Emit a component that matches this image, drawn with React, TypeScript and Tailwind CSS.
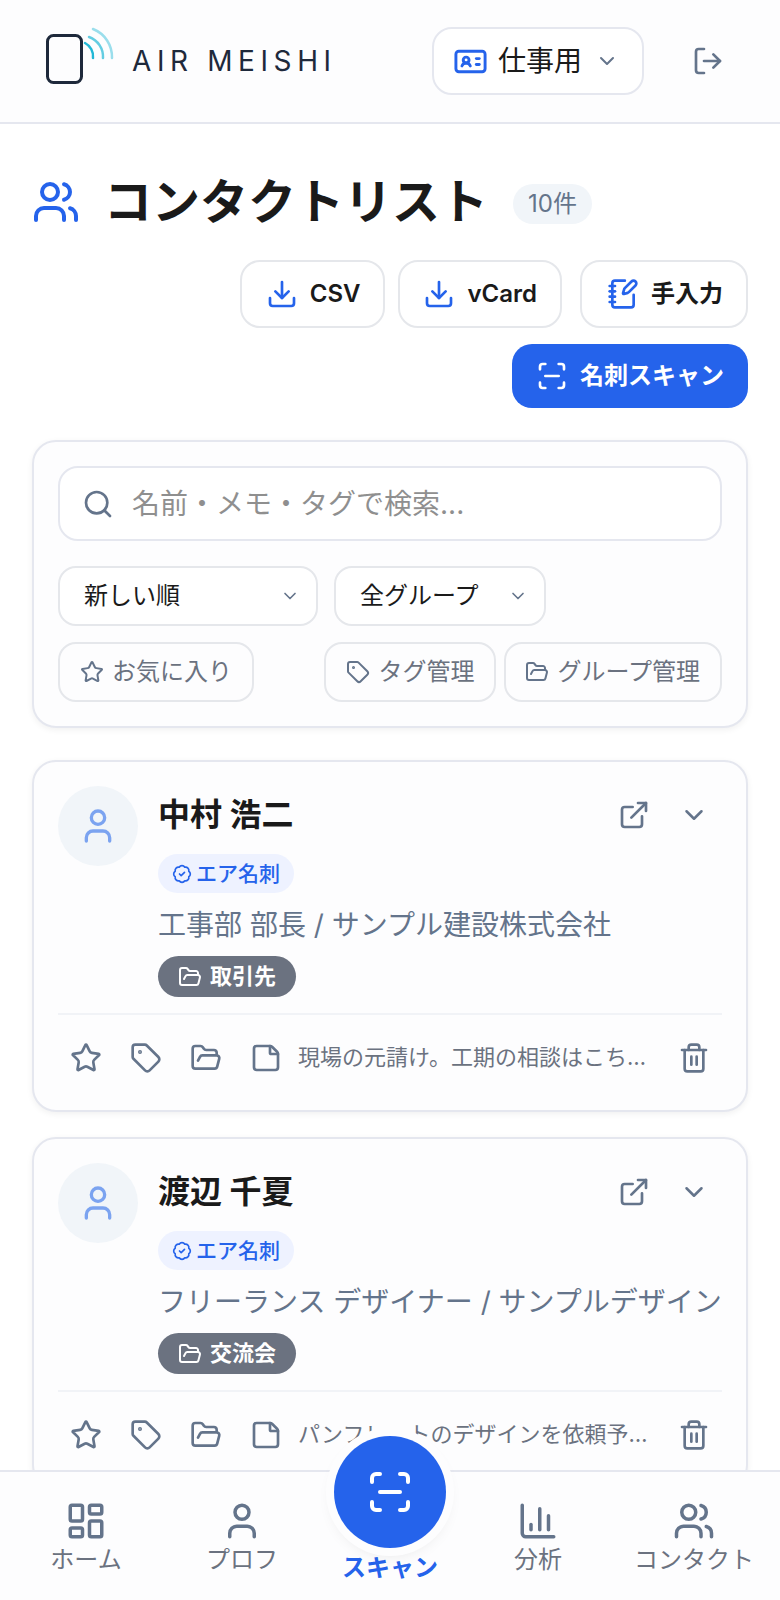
import {
  BadgeCheck,
  ChartColumn,
  ChevronDown,
  Download,
  ExternalLink,
  FolderOpen,
  IdCard,
  LayoutDashboard,
  LogOut,
  NotebookPen,
  ScanLine,
  Search,
  Star,
  StickyNote,
  Tag,
  Trash2,
  User,
  Users,
} from 'lucide-react'

const CONTACTS = [
  {
    name: '中村 浩二',
    role: '工事部 部長 / サンプル建設株式会社',
    group: '取引先',
    memo: '現場の元請け。工期の相談はこちらまで。担当者',
  },
  {
    name: '渡辺 千夏',
    role: 'フリーランス デザイナー / サンプルデザイン',
    group: '交流会',
    memo: 'パンフレットのデザインを依頼予定。来月に打合せ',
  },
]

const NAV_LEFT = [
  { label: 'ホーム', Icon: LayoutDashboard },
  { label: 'プロフ', Icon: User },
]

const NAV_RIGHT = [
  { label: '分析', Icon: ChartColumn },
  { label: 'コンタクト', Icon: Users },
]

function Logo() {
  return (
    <svg width="72" height="62" viewBox="0 0 72 62" fill="none" className="shrink-0 overflow-visible">
      <rect x="4.5" y="5.5" width="34" height="47" rx="6" stroke="#1e293b" strokeWidth="3" />
      <path d="M42 13A15 15 0 0 1 50 28" stroke="#22b8d6" strokeWidth="2.5" strokeLinecap="round" />
      <path d="M46 7A21 21 0 0 1 60 28" stroke="#22b8d6" strokeOpacity="0.7" strokeWidth="2.5" strokeLinecap="round" />
      <path d="M50 -1A30 30 0 0 1 69 28" stroke="#22b8d6" strokeOpacity="0.45" strokeWidth="2.5" strokeLinecap="round" />
    </svg>
  )
}

function ActionButton({ Icon, label, className = '' }: { Icon: typeof Download; label: string; className?: string }) {
  return (
    <button className={`h-[68px] px-[23px] flex items-center gap-3 bg-white border-2 border-[#e5e7eb] rounded-[20px] text-[24px] font-semibold text-[#1a1a1a] ${className}`}>
      <Icon size={32} strokeWidth={2} className="text-[#2563eb]" />
      {label}
    </button>
  )
}

function FilterSelect({ label, width }: { label: string; width: string }) {
  return (
    <div className={`${width} h-[60px] pl-[24px] pr-[16px] flex items-center justify-between bg-white border-2 border-[#e5e7eb] rounded-[18px] text-[24px] text-[#1a1a1a]`}>
      {label}
      <ChevronDown size={20} strokeWidth={2} className="text-[#64748b]" />
    </div>
  )
}

function OutlineButton({ Icon, label, className = '' }: { Icon: typeof Star; label: string; className?: string }) {
  return (
    <button className={`h-[60px] px-5 flex items-center gap-2 border-2 border-[#e5e7eb] rounded-[18px] text-[24px] text-[#6b7280] bg-[#fdfdfe] ${className}`}>
      <Icon size={24} strokeWidth={2} className="text-[#64748b]" />
      {label}
    </button>
  )
}

function ContactCard({ name, role, group, memo }: { name: string; role: string; group: string; memo: string }) {
  return (
    <div className="bg-[#fdfdfe] border-2 border-[#e5e7ef] rounded-[24px] shadow-[0_2px_6px_rgba(0,0,0,0.06)] px-6 pt-6 pb-[36px]">
      <div className="flex gap-5">
        <div className="w-20 h-20 shrink-0 rounded-full bg-[#f1f5f9] flex items-center justify-center">
          <User size={40} strokeWidth={2} className="text-[#7ba3f0]" />
        </div>
        <div className="flex-1 min-w-0">
          <div className="flex items-center justify-between h-[56px] mt-[1px]">
            <div className="text-[32px] font-bold text-[#1a1a1a]">{name}</div>
            <div className="flex items-center gap-[29px] pr-[13px]">
              <ExternalLink size={32} strokeWidth={2} className="text-[#64748b]" />
              <ChevronDown size={30} strokeWidth={2} className="text-[#64748b]" />
            </div>
          </div>
          <div className="mt-[11px] w-fit h-[39px] px-[14px] flex items-center gap-1 rounded-full bg-[#eef2ff] text-[#2563eb] text-[21px] font-medium">
            <BadgeCheck size={20} strokeWidth={2} />
            エア名刺
          </div>
          <div className="mt-[10px] text-[28px] leading-[44px] text-[#64748b] whitespace-nowrap">{role}</div>
          <div className="mt-[9px] w-fit h-[41px] px-5 flex items-center gap-2 rounded-full bg-[#6b7280] text-white text-[22px] font-semibold">
            <FolderOpen size={24} strokeWidth={2} />
            {group}
          </div>
        </div>
      </div>
      <div className="mt-[16px] border-t-2 border-[#f1f3f7] pt-[26px] flex items-center pl-3 text-[#64748b]">
        <Star size={32} strokeWidth={2} className="shrink-0" />
        <Tag size={32} strokeWidth={2} className="shrink-0 ml-7" />
        <FolderOpen size={32} strokeWidth={2} className="shrink-0 ml-7" />
        <StickyNote size={32} strokeWidth={2} className="shrink-0 ml-7" />
        <div className="w-[351px] ml-[16px] truncate text-[22px] text-[#6b7280]">{memo}</div>
        <Trash2 size={32} strokeWidth={2} className="shrink-0 ml-auto mr-3" />
      </div>
    </div>
  )
}

export default function App() {
  return (
    <div className="relative h-[1600px] w-[780px] overflow-hidden bg-white font-['Inter','Noto_Sans_CJK_JP',sans-serif]">
      {/* Header */}
      <header className="h-[124px] bg-[#fdfdfe] border-b-2 border-[#e5e7ef] pl-[43px] pr-[56px] flex items-center justify-between">
        <div className="flex items-center gap-[17px]">
          <Logo />
          <span className="text-[28px] tracking-[0.2em] text-[#1e293b]">AIR MEISHI</span>
        </div>
        <div className="flex items-center gap-[48px]">
          <div className="h-[68px] w-[212px] pl-[19px] pr-[23px] flex items-center gap-[10px] bg-white border-2 border-[#e5e7ef] rounded-[20px] text-[28px] text-[#1a1a1a] whitespace-nowrap">
            <IdCard size={35} strokeWidth={2} className="shrink-0 text-[#2563eb]" />
            仕事用
            <ChevronDown size={24} strokeWidth={2} className="shrink-0 ml-auto text-[#64748b]" />
          </div>
          <LogOut size={32} strokeWidth={2} className="text-[#64748b]" />
        </div>
      </header>

      <main className="px-8 pt-[50px]">
        {/* Title */}
        <div className="flex items-center h-[56px]">
          <Users size={48} strokeWidth={2} className="text-[#2563eb]" />
          <h1 className="ml-[24px] text-[48px] font-bold text-[#1a1a1a]">コンタクトリスト</h1>
          <span className="ml-[25px] mt-[4px] h-[40px] px-[15px] flex items-center rounded-full bg-[#f1f5f9] text-[24px] text-[#64748b]">10件</span>
        </div>

        {/* Actions */}
        <div className="mt-[30px] flex flex-wrap justify-end gap-x-[13px] gap-y-4">
          <ActionButton Icon={Download} label="CSV" className="pl-[24px]" />
          <ActionButton Icon={Download} label="vCard" />
          <ActionButton Icon={NotebookPen} label="手入力" className="ml-[5px] pl-[25px]" />
          <button className="h-[64px] px-6 flex items-center gap-3 bg-[#2563eb] rounded-[20px] text-[24px] font-semibold text-white">
            <ScanLine size={32} strokeWidth={2} />
            名刺スキャン
          </button>
        </div>

        {/* Filters */}
        <div className="mt-8 bg-[#fdfdfe] border-2 border-[#e5e7ef] rounded-[24px] shadow-[0_2px_6px_rgba(0,0,0,0.06)] p-6">
          <div className="h-[75px] pl-[22px] pr-6 flex items-center gap-[18px] bg-white border-2 border-[#e5e7ef] rounded-[20px]">
            <Search size={32} strokeWidth={2} className="text-[#64748b]" />
            <span className="text-[28px] text-[#8f8f8f]">名前・メモ・タグで検索...</span>
          </div>
          <div className="mt-[25px] flex gap-4">
            <FilterSelect label="新しい順" width="w-[260px]" />
            <FilterSelect label="全グループ" width="w-[212px]" />
          </div>
          <div className="mt-[16px] flex items-center">
            <OutlineButton Icon={Star} label="お気に入り" />
            <div className="ml-auto flex gap-2">
              <OutlineButton Icon={Tag} label="タグ管理" />
              <OutlineButton Icon={FolderOpen} label="グループ管理" className="pl-[19px]" />
            </div>
          </div>
        </div>

        {/* Contacts */}
        <div className="mt-[32px] flex flex-col gap-[25px]">
          {CONTACTS.map((contact) => (
            <ContactCard key={contact.name} {...contact} />
          ))}
        </div>
      </main>

      {/* Bottom nav */}
      <nav className="absolute bottom-0 left-0 right-0 h-[130px] bg-[#fdfdfe] border-t-2 border-[#e5e7ef] grid grid-cols-[172px_140px_156px_140px_172px] text-[#64748b]">
        {NAV_LEFT.map(({ label, Icon }) => (
          <div key={label} className="flex flex-col items-center pt-[28px]">
            <Icon size={42} strokeWidth={2} />
            <span className="text-[24px] text-[#6b7280] leading-[36px]">{label}</span>
          </div>
        ))}
        <div className="relative flex flex-col items-center">
          <div className="absolute -top-[36px] w-[112px] h-[112px] rounded-full bg-[#2563eb] flex items-center justify-center text-white shadow-[0_0_0_8px_#fdfdfe,0_6px_16px_rgba(0,0,0,0.1)]">
            <ScanLine size={48} strokeWidth={2} />
          </div>
          <span className="mt-[78px] text-[24px] font-semibold text-[#2563eb] leading-[36px] whitespace-nowrap">スキャン</span>
        </div>
        {NAV_RIGHT.map(({ label, Icon }) => (
          <div key={label} className="flex flex-col items-center pt-[28px]">
            <Icon size={42} strokeWidth={2} />
            <span className="text-[24px] text-[#6b7280] leading-[36px]">{label}</span>
          </div>
        ))}
      </nav>
    </div>
  )
}
